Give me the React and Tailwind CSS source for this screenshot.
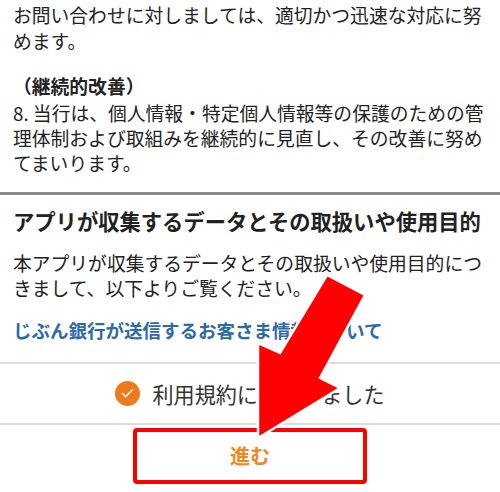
import { Check } from 'lucide-react';

const jp = { fontFamily: '"Noto Sans CJK JP", "Noto Sans", sans-serif' };

// annotation arrow over the page
const Arrow = () => (
  <svg
    className="pointer-events-none absolute left-0 top-0"
    width="500"
    height="492"
    viewBox="0 0 500 492"
  >
    <polygon
      points="327,275 365,295 320,378 340,388 258,438 258,343 280,353"
      fill="#ff0000"
      stroke="#ffffff"
      strokeWidth="2.5"
      strokeLinejoin="miter"
    />
  </svg>
);

export default function App() {
  return (
    <div
      className="relative h-[492px] w-[500px] overflow-hidden bg-white text-[#222]"
      style={jp}
    >
      <div className="px-[13px] pt-[2px]">
        <p className="text-[18.8px] leading-[26px]">
          お問い合わせに対しましては、適切かつ迅速な対応に努
          <br />
          めます。
        </p>
        <p className="mt-[18px] text-[18.8px] font-bold leading-[28px]">
          （継続的改善）
        </p>
        <p className="text-[18.8px] leading-[25px]">
          8. 当行は、個人情報・特定個人情報等の保護のための管
          <br />
          理体制および取組みを継続的に見直し、その改善に努め
          <br />
          てまいります。
        </p>
      </div>

      <div className="mt-[17px] h-[3px] bg-[#8a8a8a]" />

      <div className="px-[13px] pt-[11px]">
        <h2 className="text-[21.3px] font-bold leading-[30px]">
          アプリが収集するデータとその取扱いや使用目的
        </h2>
        <p className="mt-[14px] text-[18.8px] leading-[25px]">
          本アプリが収集するデータとその取扱いや使用目的につ
          <br />
          きまして、以下よりご覧ください。
        </p>
        <p className="mt-[18px] text-[18.5px] font-bold leading-[25px] text-[#2d6aa6]">
          じぶん銀行が送信するお客さま情報について
        </p>
      </div>

      <div className="mt-[19px] h-[2px] bg-[#dcdcdc]" />

      <div className="flex h-[59px] items-center justify-center gap-[12px]">
        <span className="flex h-[25px] w-[25px] items-center justify-center rounded-full bg-[#ee7a1c]">
          <Check size={15} strokeWidth={2.5} className="text-white" />
        </span>
        <span className="text-[21.1px] leading-[28px] text-[#333]">
          利用規約に同意しました
        </span>
      </div>

      <div className="h-[2px] bg-[#dcdcdc]" />

      <div className="flex justify-center pt-[3px]">
        <button className="flex h-[56px] w-[234px] items-center justify-center rounded-[4px] border-[4px] border-[#ff0000] bg-white text-[20px] font-bold text-[#f0891c]">
          進む
        </button>
      </div>

      <Arrow />
    </div>
  );
}
